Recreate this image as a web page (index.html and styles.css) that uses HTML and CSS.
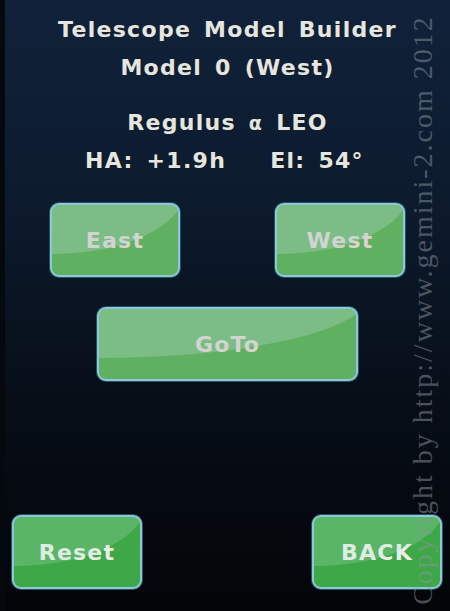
FILE: index.html
```html
<!DOCTYPE html>
<html>
<head>
<meta charset="utf-8">
<link rel="stylesheet" href="styles.css">
</head>
<body>
<div class="screen">
  <div class="titles">
    <div class="line">Telescope Model Builder</div>
    <div class="line">Model 0 (West)</div>
  </div>
  <div class="star">
    <div class="line">Regulus <span class="alpha">α</span> LEO</div>
    <div class="line coords"><span>HA: +1.9h</span><span>El: 54°</span></div>
  </div>
  <div class="row row-ew">
    <div class="btn dim">East</div>
    <div class="btn dim">West</div>
  </div>
  <div class="row row-goto">
    <div class="btn dim wide">GoTo</div>
  </div>
  <div class="row row-bottom">
    <div class="btn">Reset</div>
    <div class="btn">BACK</div>
  </div>
  <div class="watermark">Copyright by http://www.gemini-2.com 2012</div>
</div>
</body>
</html>
```
FILE: styles.css
```css
* { box-sizing: border-box; }
html, body { margin: 0; padding: 0; }
body { background: #000; }
.screen {
  position: relative;
  width: 450px;
  height: 611px;
  overflow: hidden;
  display: flex;
  flex-direction: column;
  padding: 11px 0 22px 0;
  background: linear-gradient(180deg, #10223a 0%, #0c1a2c 35%, #070e18 65%, #030508 100%);
  border-left: 5px solid #05080c;
  font-family: "DejaVu Sans", "Liberation Sans", sans-serif;
  font-weight: bold;
  color: #e6e6de;
}
.titles .line, .star .line {
  text-align: center;
  font-size: 22px;
  letter-spacing: 1.3px;
  word-spacing: 4px;
}
.titles .line { line-height: 38px; }
.star { margin-top: 17px; }
.star .line { line-height: 37px; }
.alpha { font-size: 19px; }
.coords { display: flex; justify-content: center; gap: 44px; padding-right: 6px; }
.row { display: flex; }
.row-ew { margin-top: 24px; padding: 0 45px 0 45px; justify-content: space-between; }
.row-goto { margin-top: 30px; padding-left: 92px; }
.row-bottom { margin-top: auto; padding: 0 8px 0 7px; justify-content: space-between; }
.btn {
  position: relative;
  overflow: hidden;
  width: 130px;
  height: 74px;
  border-radius: 9px;
  border: 2px solid #8cc8d6;
  box-shadow: 0 0 0 1px #27506a;
  background: #3ea747;
  display: flex;
  align-items: center;
  justify-content: center;
  font-size: 22px;
  letter-spacing: 1.2px;
  color: #e8eee6;
}
.btn::before {
  content: "";
  position: absolute;
  left: -105%;
  top: -110%;
  width: 210%;
  height: 180%;
  border-radius: 50%;
  background: rgba(190, 230, 220, 0.22);
}
.btn.dim { background: #5fb060; color: #dcd2ce; }
.btn.dim::before { background: rgba(190, 220, 220, 0.3); }
.btn.wide { width: 261px; }
.watermark {
  position: absolute;
  left: 418px;
  top: 310px;
  transform: translate(-50%, -50%) rotate(-90deg);
  white-space: nowrap;
  font-family: "Liberation Serif", "DejaVu Serif", serif;
  font-weight: normal;
  font-size: 28px;
  color: rgba(140, 150, 160, 0.5);
  letter-spacing: 2px;
}
```
